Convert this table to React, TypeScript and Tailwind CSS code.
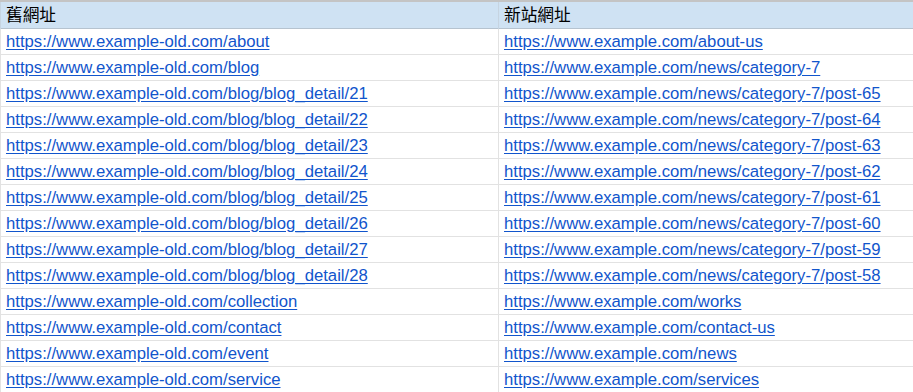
const rows: [string, string][] = [
  ["https://www.example-old.com/about", "https://www.example.com/about-us"],
  ["https://www.example-old.com/blog", "https://www.example.com/news/category-7"],
  ["https://www.example-old.com/blog/blog_detail/21", "https://www.example.com/news/category-7/post-65"],
  ["https://www.example-old.com/blog/blog_detail/22", "https://www.example.com/news/category-7/post-64"],
  ["https://www.example-old.com/blog/blog_detail/23", "https://www.example.com/news/category-7/post-63"],
  ["https://www.example-old.com/blog/blog_detail/24", "https://www.example.com/news/category-7/post-62"],
  ["https://www.example-old.com/blog/blog_detail/25", "https://www.example.com/news/category-7/post-61"],
  ["https://www.example-old.com/blog/blog_detail/26", "https://www.example.com/news/category-7/post-60"],
  ["https://www.example-old.com/blog/blog_detail/27", "https://www.example.com/news/category-7/post-59"],
  ["https://www.example-old.com/blog/blog_detail/28", "https://www.example.com/news/category-7/post-58"],
  ["https://www.example-old.com/collection", "https://www.example.com/works"],
  ["https://www.example-old.com/contact", "https://www.example.com/contact-us"],
  ["https://www.example-old.com/event", "https://www.example.com/news"],
  ["https://www.example-old.com/service", "https://www.example.com/services"],
];

export default function App() {
  return (
    <div
      className="w-[913px] h-[392px] overflow-hidden bg-white border-t-2 border-[#c4c4c4]"
      style={{ fontFamily: '"Liberation Sans", Arial, "Noto Sans CJK TC", sans-serif' }}
    >
      <div className="grid grid-cols-[499px_1fr] h-[27px] bg-[#cfe2f3] border-b border-[#b6c3cf] text-[16.7px] text-black leading-[27px]">
        <div className="pl-[5px] border-l border-r border-[#c6d4e1]">舊網址</div>
        <div className="pl-[5px]">新站網址</div>
      </div>
      {rows.map(([a, b]) => (
        <div
          key={a}
          className="grid grid-cols-[499px_1fr] h-[26px] border-b border-[#e2e2e2] text-[16.7px] leading-[25px] text-[#1155cc]"
        >
          <div className="pl-[5px] border-l border-r border-[#e2e2e2] whitespace-nowrap">
            <span className="underline underline-offset-2">{a}</span>
          </div>
          <div className="pl-[5px] whitespace-nowrap">
            <span className="underline underline-offset-2">{b}</span>
          </div>
        </div>
      ))}
    </div>
  );
}
